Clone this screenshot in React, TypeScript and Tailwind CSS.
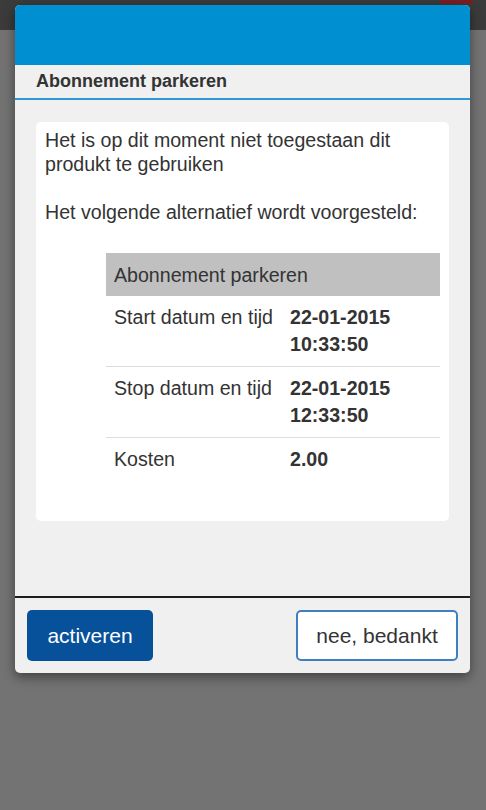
import React from 'react';

const rows = [
  { label: 'Start datum en tijd', value: ['22-01-2015', '10:33:50'] },
  { label: 'Stop datum en tijd', value: ['22-01-2015', '12:33:50'] },
  { label: 'Kosten', value: ['2.00'] },
];

const App: React.FC = () => {
  return (
    <div className="relative w-[486px] h-[810px] overflow-hidden bg-[#737373] font-['Liberation_Sans',Arial,sans-serif]">
      {/* Background app bar */}
      <div className="h-[30px] bg-[#3b3b3b] flex items-start justify-between">
        <span className="pl-[22px] pt-[2px] text-[20px] text-[#555]">Parkeren</span>
        <div className="mr-[13px] w-[33px] h-[4px] bg-[#7a1d24]" />
      </div>

      {/* Dialog */}
      <div className="absolute left-[15px] top-[5px] w-[455px] rounded-[5px] bg-[#f0f0f0] shadow-[0_4px_12px_rgba(0,0,0,0.45)] overflow-hidden">
        <div className="h-[60px] bg-[#0090d2]" />
        <div className="h-[35px] px-[21px] flex items-center border-b-2 border-[#2d9ad5] text-[18px] font-bold text-[#333]">
          Abonnement parkeren
        </div>

        <div className="px-[21px] pt-[22px] h-[496px]">
          <div className="bg-white rounded-[5px] h-[399px] pt-[6px] px-[9px] text-[19.6px] leading-[24px] text-[#333]">
            <p>Het is op dit moment niet toegestaan dit produkt te gebruiken</p>
            <p className="mt-[24px]">Het volgende alternatief wordt voorgesteld:</p>

            <div className="mt-[29px] ml-[61px]">
              <div className="h-[43px] bg-[#c0c0c0] flex items-center px-[8px]">Abonnement parkeren</div>
              {rows.map((row, i) => (
                <div
                  key={row.label}
                  className={`flex px-[8px] py-[8px] leading-[27px] ${i < rows.length - 1 ? 'border-b border-[#dddddd]' : ''}`}
                >
                  <div className="w-[176px] shrink-0">{row.label}</div>
                  <div className="font-bold">
                    {row.value.map((v) => (
                      <div key={v}>{v}</div>
                    ))}
                  </div>
                </div>
              ))}
            </div>
          </div>
        </div>

        <div className="border-t-2 border-[#1e1e1e] px-[12px] pt-[12px] pb-[12px] flex justify-between">
          <button className="w-[126px] h-[51px] rounded-[5px] bg-[#07519a] text-white text-[21px]">
            activeren
          </button>
          <button className="w-[162px] h-[51px] rounded-[5px] bg-white border-2 border-[#3f7fbf] text-[#333] text-[21px]">
            nee, bedankt
          </button>
        </div>
      </div>
    </div>
  );
};

export default App;
